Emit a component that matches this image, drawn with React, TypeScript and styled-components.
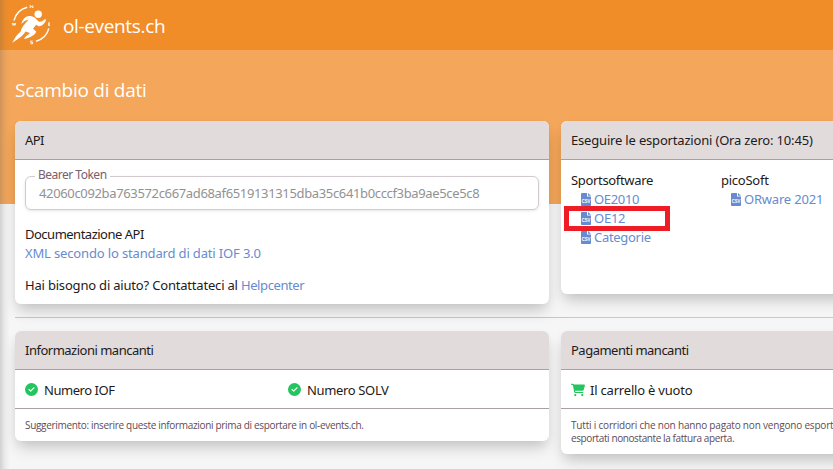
import React from "react";
import styled, { createGlobalStyle } from "styled-components";
import { FaCartShopping, FaCircleCheck } from "react-icons/fa6";

const GlobalStyle = createGlobalStyle`
  * { box-sizing: border-box; }
  body {
    margin: 0;
    overflow: hidden;
    background: #f6f6f6;
    color: #221a20;
    font-family: "Noto Sans", sans-serif;
    font-size: 13px;
    line-height: 19px;
  }
`;

const Page = styled.div`
  width: 833px;
  height: 469px;
  overflow: hidden;
  position: relative;
  background: linear-gradient(#f4a75a 0 204px, #f6f6f6 204px);
`;

const EdgeShade = styled.div`
  position: absolute;
  inset: 0 auto 0 0;
  width: 10px;
  background: linear-gradient(90deg, rgba(90, 90, 90, 0.24), rgba(90, 90, 90, 0.07) 50%, transparent);
`;

const Header = styled.header`
  height: 50px;
  padding-left: 11px;
  display: flex;
  align-items: center;
  background: #f18d29;
  color: #fff;
`;

const Brand = styled.span`
  margin: 1px 0 0 12px;
  font-family: "Open Sans", "Noto Sans", sans-serif;
  font-size: 19px;
  line-height: 26px;
  white-space: nowrap;
  letter-spacing: -0.35px;
`;

const Title = styled.h1`
  margin: 0;
  padding: 27px 0 0 15px;
  height: 71px;
  color: #fff;
  font: 400 19px/26px "Open Sans", "Noto Sans", sans-serif;
  letter-spacing: -0.27px;
`;

const CardRow = styled.div`
  display: grid;
  grid-template-columns: 534px 534px;
  column-gap: 12px;
  align-items: start;
  padding-left: 15px;
`;

const Card = styled.section<{ $h: number }>`
  height: ${(p) => p.$h}px;
  background: #fff;
  border-radius: 6px;
  box-shadow: 0 10px 15px -3px rgba(0, 0, 0, 0.16), 0 4px 12px -2px rgba(0, 0, 0, 0.08);
`;

const CardHead = styled.div<{ $ls: number }>`
  height: 39px;
  padding: 10px 10px 0;
  border-bottom: 1px solid #aa9fa6;
  border-radius: 6px 6px 0 0;
  background: #e1dbdb;
  white-space: nowrap;
  letter-spacing: ${(p) => p.$ls}px;
`;

const Text = styled.span<{ $ls?: number }>`
  letter-spacing: ${(p) => p.$ls ?? 0}px;
  white-space: nowrap;
`;

const Link = styled.a<{ $ls?: number }>`
  color: #678bd0;
  letter-spacing: ${(p) => p.$ls ?? 0}px;
  white-space: nowrap;
`;

const Field = styled.fieldset`
  margin: 6px 10px 0;
  height: 44px;
  padding: 0 13px;
  border: 1px solid #d3cacf;
  border-radius: 6px;
  box-shadow: 0 1px 3px rgba(0, 0, 0, 0.1);
`;

const Legend = styled.legend`
  margin-left: -4px;
  padding: 0 3px 4px;
  font-size: 12px;
  line-height: 17px;
  letter-spacing: -0.5px;
  color: #77606f;
`;

const Token = styled.div`
  margin-top: -3px;
  color: #929292;
  white-space: nowrap;
  letter-spacing: -0.35px;
`;

const Paragraph = styled.p<{ $top: number }>`
  margin: ${(p) => p.$top}px 10px 0;
`;

const Exports = styled.div`
  display: grid;
  grid-template-columns: 150px 150px;
  padding: 11px 10px 0;
`;

const ExportItem = styled.div`
  display: flex;
  align-items: center;
  gap: 3px;
  padding-left: 10px;
  height: 19px;
  color: #678bd0;
  position: relative;
`;

const Highlight = styled.span`
  position: absolute;
  left: -7px;
  top: -3px;
  width: 106px;
  height: 25px;
  border: 5px solid #ee1c25;
`;

const Divider = styled.hr`
  margin: 13px 0 13px 15px;
  border: 0;
  height: 1px;
  background: #cac6c8;
`;

const Status = styled.div`
  display: grid;
  grid-template-columns: 263px 1fr;
  height: 39px;
  padding: 3px 10px 0;
  border-bottom: 1px solid #aa9fa6;
`;

const StatusItem = styled.div<{ $gap: number }>`
  display: flex;
  align-items: center;
  gap: ${(p) => p.$gap}px;
  white-space: nowrap;

  svg { color: #22c55e; margin-top: -2px; }
`;

const Hint = styled.p`
  margin: 10px 10px 0;
  color: #5d4b57;
  font: 10px/13px "Open Sans", "Noto Sans", sans-serif;
  white-space: nowrap;
`;

function Logo() {
  return (
    <svg width="40" height="42" viewBox="11 4 40 42" fill="none" stroke="#fff">
      <path d="M14 20.5A18 18 0 0 1 27.2 7.2M48.8 28.5A18 18 0 0 1 36 41.2" strokeWidth="1.4" />
      <circle cx="38.2" cy="14.2" r="3.7" fill="#fff" stroke="none" />
      <path
        d="M21.5 24C22.2 19 26 15.7 30.2 16C34.5 16.3 36.3 19.5 38.5 21.2C40.8 22.8 42.8 21 45.2 18.8L46 20.6C44.2 24.2 41.2 27 38 26L36.2 24.8L33 28.7L36.2 31.4C35.2 34.8 30.5 37.5 24 39C25.3 36.2 28.8 34.7 30 33L25.4 31.4C23 36 18.5 38.5 12.3 42.8C15 37.5 17 34.5 20.5 31.7C21.5 27 25 23.5 28.2 20.2C25.2 19.6 24 22.2 21.5 24Z"
        fill="#fff"
        stroke="none"
      />
      <path d="M30.2 8V5.3L32.8 8V5.3M12.3 23l.8 2.4.9-2.4.9 2.4.8-2.4M50 22.8H48.6v2.8H50M48.6 24.2H50M32.6 41h-2v1.3h2v1.5h-2" strokeWidth="0.9" />
    </svg>
  );
}

function CsvIcon() {
  return (
    <svg width="10" height="13" viewBox="0 0 10 13">
      <path d="M1 0H6V3.5H10V12.2A.8.8 0 0 1 9.2 13H.8A.8.8 0 0 1 0 12.2V1A1 1 0 0 1 1 0ZM7 0L10 2.7H7Z" fill="#678bd0" />
      <text x="5" y="10" textAnchor="middle" fontSize="4.8" fontWeight="700" fontFamily="Liberation Sans, sans-serif" textLength="8.6" lengthAdjust="spacingAndGlyphs" fill="#fff">
        CSV
      </text>
    </svg>
  );
}

function Export({ label, marked, ls }: { label: string; marked?: boolean; ls?: number }) {
  return (
    <ExportItem>
      <CsvIcon />
      <Link $ls={ls}>{label}</Link>
      {marked && <Highlight />}
    </ExportItem>
  );
}

export default function App() {
  return (
    <Page>
      <GlobalStyle />
      <Header>
        <Logo />
        <Brand>ol-events.ch</Brand>
      </Header>
      <Title>Scambio di dati</Title>
      <CardRow>
        <Card $h={183}>
          <CardHead $ls={-0.6}>API</CardHead>
          <Field>
            <Legend>Bearer Token</Legend>
            <Token>42060c092ba763572c667ad68af6519131315dba35c641b0cccf3ba9ae5ce5c8</Token>
          </Field>
          <Paragraph $top={15}>
            <Text $ls={-0.5}>Documentazione API</Text>
            <br />
            <Link $ls={-0.15}>XML secondo lo standard di dati IOF 3.0</Link>
          </Paragraph>
          <Paragraph $top={13}>
            <Text $ls={-0.19}>Hai bisogno di aiuto? Contattateci al </Text>
            <Link $ls={-0.4}>Helpcenter</Link>
          </Paragraph>
        </Card>
        <Card $h={173}>
          <CardHead $ls={-0.18}>Eseguire le esportazioni (Ora zero: 10:45)</CardHead>
          <Exports>
            <div>
              <Text $ls={-0.33}>Sportsoftware</Text>
              <Export label="OE2010" ls={-0.33} />
              <Export label="OE12" ls={-0.25} marked />
              <Export label="Categorie" ls={-0.3} />
            </div>
            <div>
              <Text $ls={-0.25}>picoSoft</Text>
              <Export label="ORware 2021" ls={-0.2} />
            </div>
          </Exports>
        </Card>
      </CardRow>
      <Divider />
      <CardRow>
        <Card $h={110}>
          <CardHead $ls={-0.5}>Informazioni mancanti</CardHead>
          <Status>
            <StatusItem $gap={6}><FaCircleCheck size={13} /><Text $ls={-0.45}>Numero IOF</Text></StatusItem>
            <StatusItem $gap={6}><FaCircleCheck size={13} /><Text $ls={-0.35}>Numero SOLV</Text></StatusItem>
          </Status>
          <Hint><Text $ls={-0.32}>Suggerimento: inserire queste informazioni prima di esportare in ol-events.ch.</Text></Hint>
        </Card>
        <Card $h={123}>
          <CardHead $ls={-0.5}>Pagamenti mancanti</CardHead>
          <Status>
            <StatusItem $gap={5}><FaCartShopping size={14} /><Text $ls={-0.2}>Il carrello è vuoto</Text></StatusItem>
          </Status>
          <Hint>
            <Text $ls={-0.19}>Tutti i corridori che non hanno pagato non vengono esport</Text>
            <br />
            <Text $ls={-0.4}>esportati nonostante la fattura aperta.</Text>
          </Hint>
        </Card>
      </CardRow>
      <EdgeShade />
    </Page>
  );
}
